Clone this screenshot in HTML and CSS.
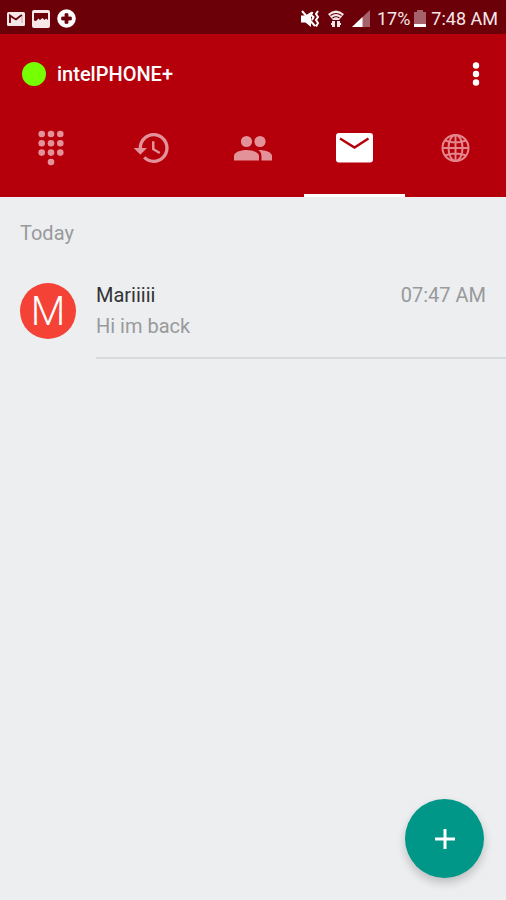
FILE: index.html
```html
<!DOCTYPE html>
<html lang="en">
<head>
<meta charset="utf-8">
<meta name="viewport" content="width=device-width, initial-scale=1">
<title>intelPHONE+</title>
<link rel="stylesheet" href="styles.css">
</head>
<body>
<div class="status">
  <div class="status-group notices">
    <svg width="18" height="18" viewBox="0 0 18 18"><rect y="2" width="18" height="14" rx="1.500" fill="#f6e8e8"/><path d="M3 13V5.500l3.500 2.500L9 9.500l3-2.500 3-2" fill="none" stroke="#6b0008" stroke-width="1.800"/><path d="M15 6v7" stroke="#c9a0a2"/></svg>
    <svg width="18" height="18" viewBox="0 0 18 18"><rect width="18" height="18" rx="2" fill="#f6e8e8"/><path d="M2 3h14v7l-2-1.500-1.500 1.500-2-2-2.500 2-1.500-1.500L4 11l-2-.5z" fill="#6b0008"/></svg>
    <svg width="19" height="19" viewBox="0 0 20 20"><circle cx="10" cy="10" r="9.800" fill="#fff"/><path d="M8.500 5h3v3.500H15v3h-3.500V15h-3v-3.500H5v-3h3.500z" fill="#6b0008" stroke="#6b0008" stroke-linejoin="round"/></svg>
  </div>
  <div class="status-group system">
    <svg width="20" height="18" viewBox="0 0 20 18"><path d="M1 5.500h4.500L11 2v15l-5.500-4.500H1z" fill="#fff"/><path d="M2 1l13 15M12.500 2l-1.500 3 2.500 2-1.500 3M18 1l-2 3 2 3-2 3 2 3-2 3.500" fill="none" stroke="#fff" stroke-width="2"/></svg>
    <svg class="wifi" width="16" height="18" viewBox="0 0 16 18"><path d="M0 4q8-7 16 0l-5 6H5z" fill="#f6e8e8"/><path d="M2.500 5.500q5.500-4 11 0M4.500 8q3.500-2.500 7 0" fill="none" stroke="#6b0008" stroke-width="1.200"/><path d="M4 11h3v6H4v-2H3v-2h1zM9 11h3v2h1v2h-1v2H9z" fill="#f6e8e8"/></svg>
    <svg class="signal" width="18" height="18" viewBox="0 0 18 18"><path d="M0 17L18 0v17z" fill="#a5626a"/><path d="M0 17L10.500 7v10z" fill="#fff"/></svg>
    <span>17%</span>
    <svg class="battery" width="12" height="18" viewBox="0 0 12 18"><path d="M3 0h6v2h3v12H0V2h3z" fill="#a5626a"/><path d="M0 14h12v3H0z" fill="#fff"/></svg>
    <span class="clock">7:48 AM</span>
  </div>
</div>
<header class="header">
  <div class="titlebar">
    <span class="presence"></span>
    <h1>intelPHONE+</h1>
    <button class="more" type="button" aria-label="More options"><svg width="8" height="24" viewBox="0 0 8 24"><g fill="#fff"><circle cx="4" cy="3.500" r="3.200"/><circle cx="4" cy="12" r="3.200"/><circle cx="4" cy="20.500" r="3.200"/></g></svg></button>
  </div>
  <nav class="tabs">
    <a href="#dial" aria-label="Dialpad"><svg width="40" height="40" viewBox="0 0 40 40"><circle cx="10.700" cy="6" r="3.300"/><circle cx="20" cy="6" r="3.300"/><circle cx="29.300" cy="6" r="3.300"/><circle cx="10.700" cy="15.300" r="3.300"/><circle cx="20" cy="15.300" r="3.300"/><circle cx="29.300" cy="15.300" r="3.300"/><circle cx="10.700" cy="24.600" r="3.300"/><circle cx="20" cy="24.600" r="3.300"/><circle cx="29.300" cy="24.600" r="3.300"/><circle cx="20" cy="34" r="3.300"/></svg></a>
    <a href="#history" aria-label="History"><svg width="40" height="40" viewBox="0 0 24 24"><path d="M13 3c-4.970 0-9 4.030-9 9H1l3.890 3.890.07.140L9 12H6c0-3.870 3.130-7 7-7s7 3.130 7 7-3.130 7-7 7c-1.930 0-3.680-.79-4.940-2.060l-1.420 1.420C8.270 19.990 10.510 21 13 21c4.970 0 9-4.030 9-9s-4.030-9-9-9zm-1 5v5l4.280 2.540.72-1.210-3.500-2.080V8z"/></svg></a>
    <a href="#contacts" aria-label="Contacts"><svg width="40" height="40" viewBox="0 0 40 40"><circle cx="13.500" cy="13.500" r="5.600"/><circle cx="27" cy="13.500" r="5.600"/><path d="M1 32.500V28c0-3.800 6.500-6 12.500-6S26 24.200 26 28v4.500zM25.500 22c6.500 0 13.500 2 13.500 6v4.500H28.500V28c0-2.600-1.200-4.600-3-6z"/></svg></a>
    <a class="active" href="#messages" aria-label="Messages" aria-current="page"><svg width="40" height="40" viewBox="0 0 40 40"><rect x="2" y="5" width="37" height="29.500" rx="3"/><path d="M6 10.500L20.500 19.500l14-9" fill="none" stroke="#b5000b" stroke-width="2.400"/></svg></a>
    <a href="#web" aria-label="Web"><svg width="40" height="40" viewBox="0 0 40 40"><g class="globe"><circle cx="20.500" cy="20" r="13"/><ellipse cx="20.500" cy="20" rx="7" ry="13"/><path d="M20.500 7v26M7.500 20h26M10 12.500q10.500 4 21 0M10 27.500q10.500-4 21 0"/></g></svg></a>
  </nav>
</header>
<main class="list">
  <h2>Today</h2>
  <article class="message">
    <div class="avatar">M</div>
    <div class="body">
      <div class="line"><span class="name">Mariiiii</span><time>07:47 AM</time></div>
      <p>Hi im back</p>
    </div>
  </article>
</main>
<button class="fab" type="button" aria-label="New message"><svg width="24" height="24" viewBox="0 0 24 24"><path d="M12 2v20M2 12h20" stroke="#fff" stroke-width="3"/></svg></button>
</body>
</html>
```
FILE: styles.css
```css
* {
  box-sizing: border-box;
}

body {
  margin: 0;
  min-height: 100vh;
  background: #eceef0;
  color: #333;
  font: 20px/24px Roboto, sans-serif;
}

svg {
  display: block;
  flex: none;
}

.status {
  display: flex;
  justify-content: space-between;
  align-items: center;
  height: 34px;
  padding: 3px 8px 0 7px;
  background: #6b0008;
  color: #f6e8e8;
  font-size: 18px;
}

.status-group {
  display: flex;
  align-items: center;
}

.notices {
  gap: 7px;
}

.system {
  gap: 5px;
}

.wifi {
  margin: 0 3px;
}

.signal {
  margin-right: 2px;
}

.battery {
  margin-left: -1px;
}

.header {
  background: #b5000b;
  color: #fff;
}

.titlebar {
  display: flex;
  align-items: center;
  height: 80px;
  padding: 0 20px 0 22px;
}

.presence {
  width: 24px;
  height: 24px;
  border-radius: 50%;
  background: #76ff03;
}

h1 {
  flex: 1;
  margin: 0 0 0 11px;
  font-size: 20px;
  font-weight: 500;
}

.more {
  padding: 0 6px;
  border: 0;
  background: none;
}

.tabs {
  display: flex;
  height: 83px;
}

.tabs a {
  display: flex;
  flex: 1;
  justify-content: center;
  padding-top: 14px;
  border-bottom: 3px solid transparent;
  fill: #e4929a;
}

.tabs .active {
  border-color: #fff;
  fill: #fff;
}

.globe {
  fill: none;
  stroke: #e4858c;
  stroke-width: 2;
}

.list {
  padding: 24px 0 0 20px;
}

h2 {
  margin: 0;
  color: #989a9c;
  font-size: 20px;
  font-weight: 400;
}

.message {
  display: flex;
  gap: 20px;
  margin-top: 38px;
}

.avatar {
  width: 56px;
  height: 56px;
  border-radius: 50%;
  background: #f44336;
  color: #fff;
  font-size: 40px;
  font-weight: 300;
  line-height: 58px;
  text-align: center;
}

.body {
  flex: 1;
  padding-bottom: 19px;
  border-bottom: 2px solid #d8dbdd;
}

.line {
  display: flex;
  justify-content: space-between;
  padding-right: 20px;
}

time,
.body p {
  color: #989a9c;
}

.body p {
  margin: 7px 0 0;
}

.fab {
  position: fixed;
  right: 22px;
  bottom: 22px;
  display: grid;
  place-items: center;
  width: 79px;
  height: 79px;
  padding: 0;
  border: 0;
  border-radius: 50%;
  background: #009688;
  box-shadow: 0 5px 10px rgba(0, 0, 0, 0.2);
}
```
